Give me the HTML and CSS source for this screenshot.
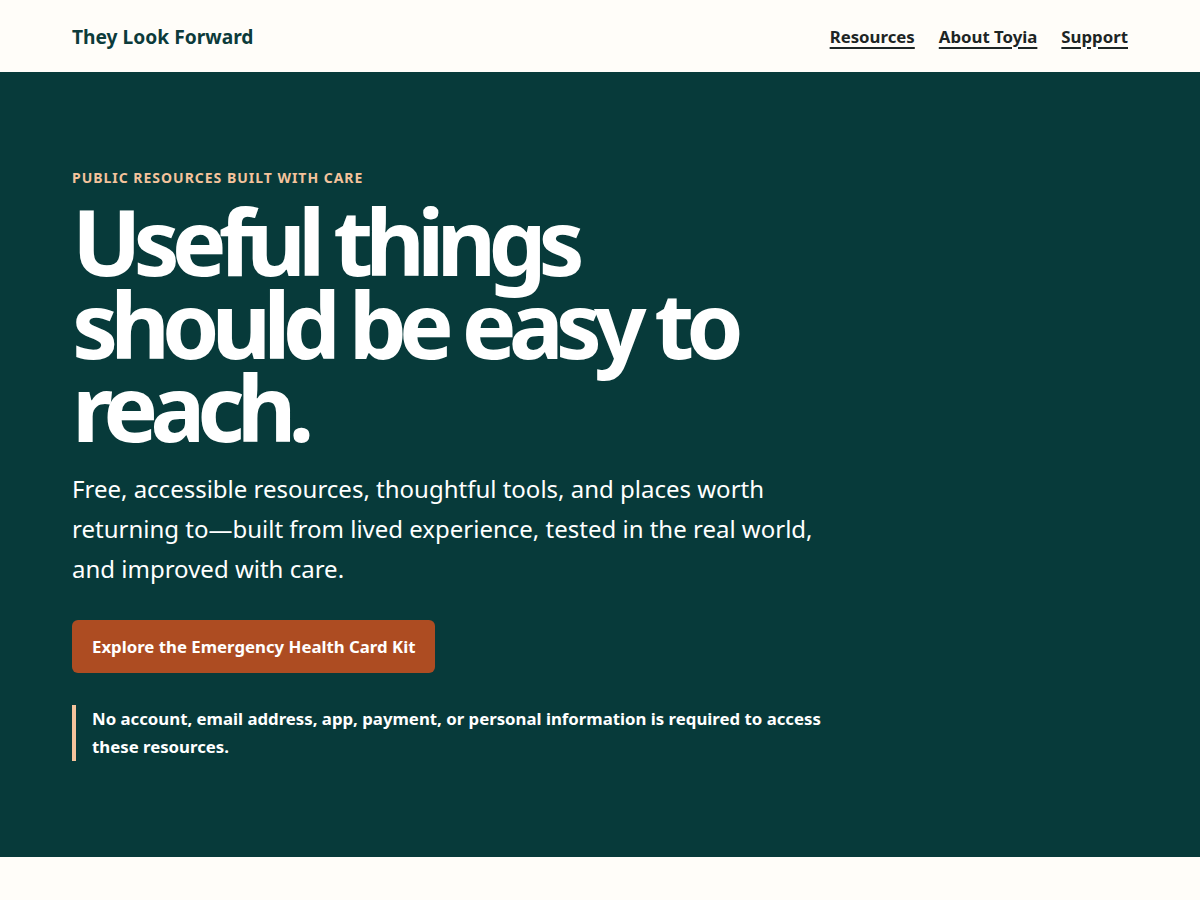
FILE: index.html
```html
<!DOCTYPE html>
<html lang="en">
<head>
    <meta charset="UTF-8">
    <meta name="viewport" content="width=device-width, initial-scale=1.0">
    <title>They Look Forward</title>
    <link rel="stylesheet" href="styles.css">
</head>
<body>
    <header class="site-header">
        <a class="brand" href="#">They Look Forward</a>
        <nav class="site-nav">
            <a href="#">Resources</a>
            <a href="#">About Toyia</a>
            <a href="#">Support</a>
        </nav>
    </header>

    <section class="hero">
        <div class="hero-inner">
            <p class="eyebrow">Public resources built with care</p>
            <h1>Useful things should be easy to reach.</h1>
            <p class="lead">Free, accessible resources, thoughtful tools, and places worth returning to—built from lived experience, tested in the real world, and improved with care.</p>
            <a class="btn" href="#">Explore the Emergency Health Card Kit</a>
            <p class="note">No account, email address, app, payment, or personal information is required to access these resources.</p>
        </div>
    </section>

    <main class="after"></main>
</body>
</html>
```

FILE: styles.css
```css
* {
    margin: 0;
    padding: 0;
    box-sizing: border-box;
}

body {
    font-family: 'Noto Sans', 'Open Sans', sans-serif;
    background: #fffdf9;
    color: #1d2525;
}

a {
    color: inherit;
}

.site-header {
    height: 72px;
    padding: 0 72px;
    display: flex;
    align-items: center;
    justify-content: space-between;
    background: #fffdf9;
}

.brand {
    font-size: 19.2px;
    font-weight: 700;
    color: #0c3b3b;
    text-decoration: none;
}

.site-nav {
    display: flex;
    gap: 24px;
}

.site-nav a {
    font-size: 16.8px;
    font-weight: 700;
    color: #1d2525;
    text-decoration: underline;
    text-underline-offset: 4px;
    text-decoration-thickness: 2px;
}

.hero {
    background: #073a3a;
    color: #fff;
    padding: 96px 72px;
}

.hero-inner {
    max-width: 760px;
}

.eyebrow {
    font-size: 14px;
    font-weight: 700;
    letter-spacing: 0.07em;
    text-transform: uppercase;
    color: #f4c39c;
    line-height: 20px;
    margin-bottom: 12px;
}

.hero h1 {
    font-size: 92px;
    font-weight: 700;
    line-height: 0.9;
    letter-spacing: -0.087em;
    max-width: 700px;
    margin-bottom: 21px;
}

.lead {
    font-size: 24px;
    line-height: 40px;
    margin-bottom: 31px;
}

.btn {
    display: inline-block;
    background: #ad4c22;
    color: #fff;
    font-size: 16.8px;
    font-weight: 700;
    line-height: 25px;
    padding: 14px 20px;
    border-radius: 6px;
    text-decoration: none;
    margin-bottom: 32px;
}

.note {
    font-size: 16.8px;
    font-weight: 700;
    line-height: 28px;
    border-left: 4px solid #f4c39c;
    padding-left: 16px;
}

.after {
    display: block;
    height: 200px;
}
```
